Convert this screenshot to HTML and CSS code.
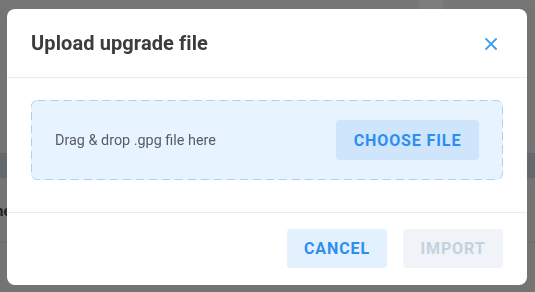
FILE: index.html
```html
<!DOCTYPE html>
<html lang="en">
<head>
<meta charset="utf-8">
<title>Upload upgrade file</title>
<link rel="stylesheet" href="styles.css">
</head>
<body>
<div class="backdrop">
  <div class="bg-top"><div class="bg-tab"></div></div>
  <div class="bg-gap1"></div>
  <div class="bg-band"></div>
  <div class="bg-row"><span class="bg-text">he</span></div>
  <div class="bg-line"></div>
</div>
<div class="dialog" role="dialog" aria-labelledby="dlg-title">
  <div class="dialog-header">
    <h2 class="dialog-title" id="dlg-title">Upload upgrade file</h2>
    <button class="close-btn" aria-label="Close">
      <svg width="12" height="12" viewBox="0 0 12 12"><path d="M1 1L11 11M11 1L1 11" stroke="#3d9ef5" stroke-width="1.9" stroke-linecap="square"/></svg>
    </button>
  </div>
  <div class="dialog-body">
    <div class="dropzone">
      <svg class="dz-border" width="100%" height="100%"><rect x="0.5" y="0.5" width="471" height="79" rx="6" ry="6" fill="none" stroke="#a9d1f6" stroke-width="1" stroke-dasharray="8 5"/></svg>
      <span class="dz-text">Drag &amp; drop .gpg file here</span>
      <button class="btn btn-choose">Choose file</button>
    </div>
  </div>
  <div class="dialog-footer">
    <button class="btn btn-cancel">Cancel</button>
    <button class="btn btn-import" disabled>Import</button>
  </div>
</div>
</body>
</html>
```

FILE: styles.css
```css
* { box-sizing: border-box; }
html, body { margin: 0; padding: 0; }
body {
  width: 535px;
  height: 292px;
  overflow: hidden;
  background: #747474;
  font-family: Roboto, "Liberation Sans", sans-serif;
}
.backdrop {
  display: flex;
  flex-direction: column;
}
.bg-top {
  height: 9px;
  display: flex;
  padding-left: 419px;
  background: #767676;
}
.bg-tab {
  width: 24px;
  background: #7d7d7d;
}
.bg-gap1 { height: 144px; }
.bg-band {
  height: 25px;
  background: #64676b;
}
.bg-row {
  height: 64px;
  display: flex;
  align-items: center;
}
.bg-text {
  margin-left: -5px;
  font-weight: 700;
  font-size: 15px;
  color: #1e1e1e;
  padding-top: 1px;
}
.bg-line {
  height: 1px;
  background: #6a6a6a;
}
.dialog {
  position: fixed;
  left: 7px;
  top: 9px;
  width: 520px;
  height: 276px;
  background: #ffffff;
  border-radius: 8px;
  display: flex;
  flex-direction: column;
  overflow: hidden;
}
.dialog-header {
  height: 69px;
  border-bottom: 1px solid #e9ebee;
  display: flex;
  align-items: center;
  justify-content: space-between;
  padding: 0 30px 0 24px;
}
.dialog-title {
  margin: 0;
  font-size: 20px;
  font-weight: 700;
  color: #3c3c3c;
  letter-spacing: 0.1px;
  padding-bottom: 1px;
}
.close-btn {
  width: 12px;
  height: 12px;
  padding: 0;
  border: 0;
  background: none;
  display: flex;
  margin-top: 2px;
}
.dialog-body {
  padding: 22px 24px 32px 24px;
  border-bottom: 1px solid #e9ebee;
}
.dropzone {
  position: relative;
  height: 80px;
  background: #e7f3fe;
  border-radius: 6px;
  display: flex;
  align-items: center;
  justify-content: space-between;
  padding: 0 24px;
}
.dz-border {
  position: absolute;
  left: 0;
  top: 0;
}
.dz-text {
  font-size: 14.4px;
  color: #585c63;
  position: relative;
}
.btn {
  font-family: Roboto, "Liberation Sans", sans-serif;
  font-weight: 700;
  font-size: 16px;
  letter-spacing: 0.9px;
  text-transform: uppercase;
  border: 0;
  border-radius: 4px;
  padding: 0;
  position: relative;
}
.btn-choose {
  width: 143px;
  height: 40px;
  background: #cfe5fc;
  color: #2d8ef0;
}
.dialog-footer {
  flex: 1;
  display: flex;
  justify-content: flex-end;
  align-items: flex-start;
  gap: 16px;
  padding: 16px 24px 0 0;
}
.btn-cancel {
  width: 100px;
  height: 39px;
  background: #e3f0fd;
  color: #2d8ef0;
}
.btn-import {
  width: 100px;
  height: 39px;
  background: #f0f3f7;
  color: #c4d2e0;
}
```
